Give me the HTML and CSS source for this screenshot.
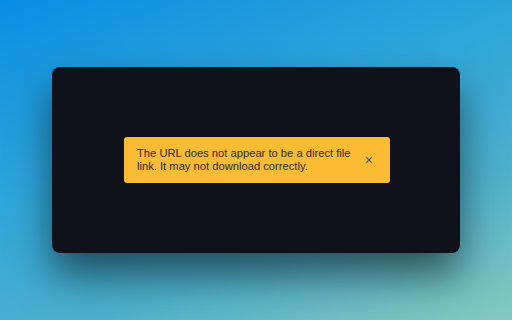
FILE: index.html
```html
<!DOCTYPE html>
<html lang="en">
<head>
    <meta charset="UTF-8">
    <meta name="viewport" content="width=device-width, initial-scale=1.0">
    <title>Download warning</title>
    <link rel="stylesheet" href="styles.css">
</head>
<body>
    <div class="stage">
        <div class="panel">
            <div class="alert">
                <p class="alert-text">The URL does not appear to be a direct file link. It may not download correctly.</p>
                <button class="alert-close" aria-label="Close">&times;</button>
            </div>
        </div>
    </div>
</body>
</html>
```
FILE: styles.css
```css
body, html {
    margin: 0;
    padding: 0;
    height: 100%;
    font-family: "Liberation Sans", Arial, sans-serif;
}
.stage {
    height: 100%;
    display: flex;
    align-items: center;
    justify-content: center;
    background: linear-gradient(160deg, #0a8ee4 0%, #2ea6da 40%, #4eb0cc 70%, #86cabd 100%);
}
.panel {
    width: 408px;
    height: 186px;
    background-color: #0f121a;
    border-radius: 8px;
    box-shadow: 0 22px 40px rgba(0, 0, 0, 0.55);
    display: flex;
    align-items: center;
    justify-content: center;
}
.alert {
    width: 266px;
    height: 46px;
    box-sizing: border-box;
    background-color: #fbbb32;
    border-radius: 3px;
    padding: 0 12px 0 13px;
    margin-left: 2px;
    display: flex;
    align-items: center;
    gap: 6px;
}
.alert-text {
    margin: 0;
    flex: 1;
    font-size: 11.2px;
    line-height: 13px;
    color: #2b2a28;
}
.alert-close {
    background: none;
    border: none;
    padding: 0 5px;
    font-size: 14px;
    line-height: 14px;
    color: #4a5266;
    cursor: pointer;
}
```
